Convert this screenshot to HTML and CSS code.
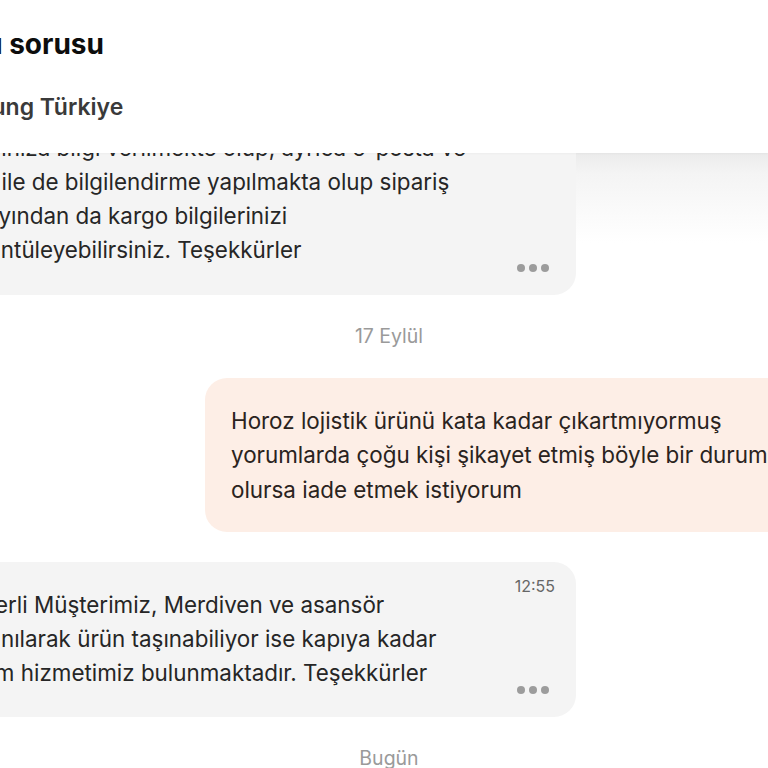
FILE: index.html
```html
<!DOCTYPE html>
<html lang="tr">
<head>
<meta charset="utf-8">
<title>Satıcı sorusu</title>
<link rel="stylesheet" href="styles.css">
</head>
<body>
<div class="page">
  <header class="header">
    <div class="header-inner">
      <h1 class="title">Satıcı sorusu</h1>
      <div class="seller">Samsung Türkiye</div>
    </div>
  </header>
  <main class="messages">
    <div class="thread">
      <div class="bubble in">
        <p class="text">Değerli Müşterimiz, siparişiniz kargoya verildiğinde<br>tarafınıza bilgi verilmekte olup, ayrıca e-posta ve<br>sms ile de bilgilendirme yapılmakta olup sipariş<br>detayından da kargo bilgilerinizi<br>görüntüleyebilirsiniz. Teşekkürler</p>
        <span class="dots"><i></i><i></i><i></i></span>
      </div>
      <div class="date">17 Eylül</div>
      <div class="bubble out">
        <p class="text">Horoz lojistik ürünü kata kadar çıkartmıyormuş<br>yorumlarda çoğu kişi şikayet etmiş böyle bir durum<br>olursa iade etmek istiyorum</p>
      </div>
      <div class="bubble in reply">
        <span class="time">12:55</span>
        <p class="text">Değerli Müşterimiz, Merdiven ve asansör<br>kullanılarak ürün taşınabiliyor ise kapıya kadar<br>teslim hizmetimiz bulunmaktadır. Teşekkürler</p>
        <span class="dots"><i></i><i></i><i></i></span>
      </div>
      <div class="date today">Bugün</div>
    </div>
  </main>
</div>
</body>
</html>
```
FILE: styles.css
```css
html, body {
  margin: 0;
  padding: 0;
  background: #ffffff;
  overflow: hidden;
}

body {
  font-family: Inter, "Noto Sans", "Liberation Sans", sans-serif;
  color: #252525;
}

.page {
  display: flex;
  flex-direction: column;
  height: 768px;
}

.header {
  position: relative;
  z-index: 2;
  background: #ffffff;
  height: 153px;
  flex: none;
  box-shadow: 0 1px 2px rgba(0, 0, 0, 0.03);
}

.header-inner {
  margin-left: -74px;
  padding-top: 28px;
}

.title {
  margin: 0;
  font-size: 28px;
  line-height: 32px;
  font-weight: 700;
  color: #0d0d0d;
}

.seller {
  margin-top: 33px;
  padding-left: 4px;
  font-size: 23px;
  line-height: 28px;
  font-weight: 600;
  color: #3a3a3a;
}

.messages {
  flex: none;
  height: 617px;
  overflow: hidden;
  display: flex;
  flex-direction: column;
  justify-content: flex-end;
  background: linear-gradient(#ebebeb 0px, #f4f4f4 20px, #ffffff 90px) no-repeat;
  background-size: 100% 100px;
}

.thread {
  width: 926px;
  margin-left: -74px;
  display: flex;
  flex-direction: column;
  flex: none;
}

.bubble {
  position: relative;
  box-sizing: border-box;
  padding: 26px;
  border-radius: 22px;
}

.bubble.in {
  align-self: flex-start;
  width: 650px;
  background: #f4f4f4;
  padding-bottom: 28px;
}

.bubble.out {
  align-self: flex-end;
  width: 647px;
  background: #fdeee6;
  padding: 26px 26px 25px;
}

.bubble.reply {
  margin-top: 30px;
  padding-bottom: 27px;
}

.text {
  margin: 0;
  font-size: 22.4px;
  line-height: 34px;
  color: #262626;
}

.out .text {
  line-height: 34.5px;
  color: #2a2320;
}

.dots {
  position: absolute;
  right: 27px;
  bottom: 23px;
  display: flex;
  gap: 4px;
}

.dots i {
  display: block;
  width: 8px;
  height: 8px;
  border-radius: 50%;
  background: #9c9c9c;
}

.time {
  position: absolute;
  top: 14px;
  right: 21px;
  font-size: 16px;
  line-height: 20px;
  color: #666666;
}

.date {
  text-align: center;
  font-size: 19.5px;
  line-height: 24px;
  color: #9a9a9a;
  margin: 29px 0 30px;
}

.date.today {
  margin: 29px 0 0;
}
```
